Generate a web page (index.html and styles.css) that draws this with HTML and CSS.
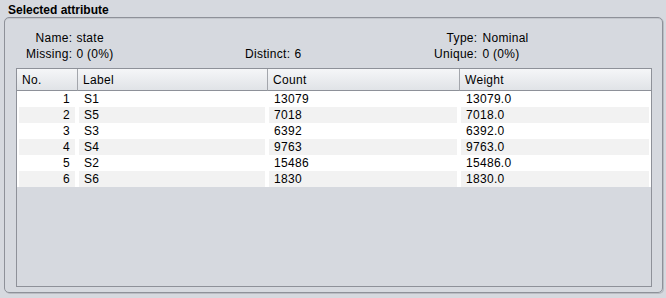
FILE: index.html
```html
<!DOCTYPE html>
<html lang="en">
<head>
    <meta charset="UTF-8">
    <title>Selected attribute</title>
    <link rel="stylesheet" href="styles.css">
</head>
<body>
    <div class="title">Selected attribute</div>
    <div class="box">
        <div class="info">
            <div class="group first">
                <span class="lbl">Name:</span><span>state</span>
                <span class="lbl">Missing:</span><span>0 (0%)</span>
            </div>
            <div class="group second">
                <span class="lbl row2">Distinct:</span><span class="row2">6</span>
            </div>
            <div class="group third">
                <span class="lbl">Type:</span><span>Nominal</span>
                <span class="lbl">Unique:</span><span>0 (0%)</span>
            </div>
        </div>
        <div class="pane">
            <table class="values">
                <colgroup>
                    <col style="width:60px">
                    <col style="width:190px">
                    <col style="width:192px">
                    <col>
                </colgroup>
                <thead>
                    <tr><th>No.</th><th>Label</th><th>Count</th><th>Weight</th></tr>
                </thead>
                <tbody id="rows"></tbody>
            </table>
        </div>
    </div>

    <script>
        const data = [
            ['S1', 13079], ['S5', 7018], ['S3', 6392],
            ['S4', 9763], ['S2', 15486], ['S6', 1830]
        ];
        const rows = document.getElementById('rows');
        data.forEach((d, i) => {
            const tr = document.createElement('tr');
            tr.innerHTML = '<td class="num">' + (i + 1) + '</td><td>' + d[0] + '</td><td>' + d[1] + '</td><td>' + d[1].toFixed(1) + '</td>';
            rows.appendChild(tr);
        });
    </script>
</body>
</html>
```

FILE: styles.css
```css
html, body {
    margin: 0;
    height: 298px;
    overflow: hidden;
}
body {
    background: #d6d9df;
    font-family: "Liberation Sans", Arial, sans-serif;
    font-size: 12px;
    letter-spacing: 0.3px;
    color: #000;
    display: flex;
    flex-direction: column;
}
.title {
    font-weight: bold;
    padding: 4px 8px 0;
    line-height: 13px;
    letter-spacing: 0;
}
.box {
    flex: 1;
    margin: 0 3px 5px 4px;
    border: 1px solid #8e9199;
    border-radius: 5px;
    box-shadow: 1px 1px 0 #b9bcc2, inset 0 1px 0 #c4c7cd;
    display: flex;
    flex-direction: column;
}
.info {
    display: flex;
    padding: 12px 0 0 21px;
    line-height: 16px;
}
.group {
    display: grid;
    grid-template-columns: auto auto;
    grid-template-rows: 16px 16px;
    column-gap: 4px;
    align-content: start;
    justify-content: start;
}
.group.first {
    width: 219px;
}
.group.second {
    width: 189px;
}
.group.third {
    column-gap: 5px;
}
.lbl {
    text-align: right;
}
.row2 {
    grid-row: 2;
}
.pane {
    flex: 1;
    margin: 6px 10px 5px 11px;
    border: 1px solid #8e9199;
    background: #d6d9df;
}
.values {
    width: 100%;
    table-layout: fixed;
    border-collapse: separate;
    border-spacing: 0;
}
.values th {
    height: 21px;
    padding: 0 5px;
    font-weight: normal;
    text-align: left;
    background: linear-gradient(#f5f6f8, #e0e3e7);
    border-bottom: 1px solid #8e9199;
    border-left: 1px solid #a3a6ac;
}
.values th:first-child {
    border-left: none;
}
.values td {
    height: 16px;
    padding: 0 5px;
    line-height: 16px;
    background: #fff;
    white-space: nowrap;
}
.values tbody tr td {
    border-left: 2px solid #fff;
    border-right: 2px solid #fff;
}
.values tbody tr:nth-child(even) td {
    background: #f2f2f2;
}
.values td.num {
    text-align: right;
}
```
